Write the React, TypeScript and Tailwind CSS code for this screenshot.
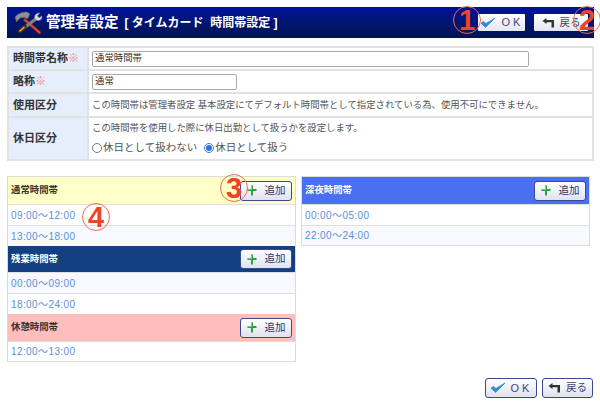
const font = { fontFamily: '"Liberation Sans", "Noto Sans CJK JP", sans-serif' };

function CheckIcon() {
  return (
    <svg width="16" height="12" viewBox="0 0 16 12" className="shrink-0">
      <path d="M1 6 L5.5 10.5 L15 1 L6 6.5 L3.5 4.5 Z" fill="#2f8fd0" stroke="#2f8fd0" strokeWidth="0.8" strokeLinejoin="round" />
    </svg>
  );
}

function BackIcon() {
  return (
    <svg width="13" height="10" viewBox="0 0 13 10" className="shrink-0">
      <path d="M0.5 3 L4.5 0 V2 H12 V9.5 H9.5 V4.2 H4.5 V6 Z" fill="#333" />
    </svg>
  );
}

function PlusIcon() {
  return (
    <svg width="10" height="11" viewBox="0 0 10 11" className="shrink-0">
      <path d="M5 0.5 V10.5" stroke="#2f9f3f" strokeWidth="2" />
      <path d="M0.5 5 H9.5" stroke="#2f9f3f" strokeWidth="2" />
      <path d="M4.6 1 V4.6 H1" fill="none" stroke="#7fe87f" strokeWidth="0.8" />
    </svg>
  );
}

function ToolsIcon() {
  return (
    <svg width="29" height="24" viewBox="0 0 29 24" className="shrink-0">
      {/* hammer handle */}
      <path d="M11 9 L25.5 21.5" stroke="#7a2018" strokeWidth="3.6" strokeLinecap="round" />
      <path d="M11 9 L25.5 21.5" stroke="#d84a35" strokeWidth="1.8" strokeLinecap="round" />
      {/* wrench */}
      <path d="M23 7 L5.5 20.5" stroke="#7d828a" strokeWidth="3.4" />
      <path d="M11 15.5 L5.5 20.5" stroke="#3a2a12" strokeWidth="3.8" strokeLinecap="round" />
      <path d="M10 16.3 L6 20" stroke="#eda52f" strokeWidth="1.6" strokeLinecap="round" />
      <path d="M21 8.5 C19.5 5 22 1.5 26 2 L23.5 4.8 L25 6.8 L28 5 C28.5 9 25 11 21 8.5 Z" fill="#d6d9de" stroke="#6d7178" strokeWidth="0.6" />
      {/* hammer head */}
      <path d="M1 6 C3 3 8 1 13 1 L16 3 L13.5 8 L10.5 6.5 L6 7 L2.5 11 Z" fill="#8f9094" stroke="#55565a" strokeWidth="0.6" />
    </svg>
  );
}

function HeaderButton({ children, width }: { children: React.ReactNode; width: string }) {
  return (
    <div className={`flex h-[17px] items-center justify-center rounded-[1px] bg-gradient-to-b from-white to-[#e4e6f2] text-[#44447a] ${width}`}>
      {children}
    </div>
  );
}

function FootButton({ children, width }: { children: React.ReactNode; width: string }) {
  return (
    <div className={`flex h-[20px] items-center justify-center rounded-[3px] border border-[#3a4a8c] bg-gradient-to-b from-white to-[#dfe2f0] text-[#44447a] ${width}`}>
      {children}
    </div>
  );
}

function AddButton() {
  return (
    <div className="flex h-[20px] w-[52px] items-center justify-center gap-[8px] rounded-[3px] border border-[#3a4a8c] bg-gradient-to-b from-white to-[#dfe2f0] text-[10.5px] text-[#33336b]">
      <PlusIcon />
      <span>追加</span>
    </div>
  );
}

function Row({ label, required, h, last, children }: { label: string; required?: boolean; h: string; last?: boolean; children: React.ReactNode }) {
  return (
    <div className={`flex ${h} ${last ? "" : "border-b-2 border-[#e2e2e2]"}`}>
      <div className="flex w-[80px] shrink-0 items-center border-r-2 border-[#e2e2e2] bg-[#e6edfc] pl-[4px] text-[11px] font-bold text-[#333]">
        {label}
        {required && <span className="font-normal text-[#f08a80]">※</span>}
      </div>
      <div className="flex min-w-0 flex-1 flex-col justify-center pl-[3px] text-[9.4px] text-[#555]">{children}</div>
    </div>
  );
}

function Input({ value, width }: { value: string; width: string }) {
  return (
    <div className={`flex h-[16px] items-center rounded-[2px] border border-[#a8a8a8] bg-white pl-[2px] text-[9.4px] text-[#333] ${width}`}>
      {value}
    </div>
  );
}

function PanelHead({ title, bg, text, h = "h-[27px]" }: { title: string; bg: string; text: string; h?: string }) {
  return (
    <div className={`flex items-center justify-between pl-[3px] pr-[3px] ${h} ${bg}`}>
      <span className={`text-[9.4px] font-bold ${text}`}>{title}</span>
      <AddButton />
    </div>
  );
}

function TimeRow({ time, alt, h = "h-[21px]" }: { time: string; alt?: boolean; h?: string }) {
  return (
    <div className={`flex items-center border-t border-[#e0e0e0] pl-[3px] text-[10px] tracking-[0.4px] text-[#5b8fd8] ${h} ${alt ? "bg-[#f8f9fe]" : "bg-white"}`}>
      {time}
    </div>
  );
}

function Marker({ n, className }: { n: string; className: string }) {
  return (
    <div className={`absolute flex h-[28px] w-[28px] items-center justify-center rounded-full border border-[#f06a50] text-[29px] font-bold leading-none text-[#ee4422] ${className}`}>
      {n}
    </div>
  );
}

export default function App() {
  return (
    <div className="relative h-[402px] w-[600px] overflow-hidden bg-white px-[7px] pt-[7px]" style={font}>
      {/* Title bar */}
      <div className="flex h-[31px] w-[587px] items-center justify-between bg-gradient-to-b from-[#00109a] to-[#02144f] pl-[7px] pr-[6px]">
        <div className="flex items-center gap-[3px]">
          <ToolsIcon />
          <span className="text-[14.5px] font-bold text-white">管理者設定</span>
          <span className="ml-[3px] whitespace-nowrap text-[12px] font-bold text-white">[ タイムカード&nbsp; 時間帯設定 ]</span>
        </div>
        <div className="flex gap-[9px]">
          <HeaderButton width="w-[47px]">
            <CheckIcon />
            <span className="ml-[6px] text-[11px] tracking-[3px]">OK</span>
          </HeaderButton>
          <HeaderButton width="w-[54px]">
            <BackIcon />
            <span className="ml-[5px] text-[10.5px]">戻る</span>
          </HeaderButton>
        </div>
      </div>

      {/* Form table */}
      <div className="mt-[8px] w-[587px] border-2 border-[#e2e2e2]">
        <Row label="時間帯名称" required h="h-[23px]">
          <Input value="通常時間帯" width="w-[437px]" />
        </Row>
        <Row label="略称" required h="h-[23px]">
          <Input value="通常" width="w-[145px]" />
        </Row>
        <Row label="使用区分" h="h-[24px]">
          <span className="whitespace-nowrap">この時間帯は管理者設定 基本設定にてデフォルト時間帯として指定されている為、使用不可にできません。</span>
        </Row>
        <Row label="休日区分" h="h-[41px]" last>
          <span>この時間帯を使用した際に休日出勤として扱うかを設定します。</span>
          <div className="mt-[5px] flex items-center text-[10.5px]">
            <span className="h-[10px] w-[10px] rounded-full border border-[#777] bg-white" />
            <span className="ml-[1px]">休日として扱わない</span>
            <span className="ml-[7px] flex h-[10px] w-[10px] items-center justify-center rounded-full border border-[#3a78d8] bg-white">
              <span className="h-[6px] w-[6px] rounded-full bg-[#2f6fe0]" />
            </span>
            <span className="ml-[1px]">休日として扱う</span>
          </div>
        </Row>
      </div>

      {/* Time band panels */}
      <div className="mt-[15px] flex items-start gap-[5px]">
        <div className="w-[289px] border border-[#dcdcdc]">
          <PanelHead title="通常時間帯" bg="bg-[#ffffc8]" text="text-[#333]" />
          <TimeRow time="09:00～12:00" />
          <TimeRow time="13:00～18:00" alt />
          <PanelHead title="残業時間帯" bg="bg-[#134083]" text="text-white" h="h-[26px]" />
          <TimeRow time="00:00～09:00" alt />
          <TimeRow time="18:00～24:00" />
          <PanelHead title="休憩時間帯" bg="bg-[#ffbebe]" text="text-[#333]" />
          <TimeRow time="12:00～13:00" h="h-[20px]" />
        </div>
        <div className="w-[289px] border border-[#dcdcdc]">
          <PanelHead title="深夜時間帯" bg="bg-[#4a6ff0]" text="text-white" />
          <TimeRow time="00:00～05:00" />
          <TimeRow time="22:00～24:00" alt h="h-[20px]" />
        </div>
      </div>

      {/* Footer buttons */}
      <div className="absolute bottom-[4px] right-[7px] flex gap-[5px]">
        <FootButton width="w-[52px]">
          <CheckIcon />
          <span className="ml-[5px] text-[11px] tracking-[3px]">OK</span>
        </FootButton>
        <FootButton width="w-[51px]">
          <BackIcon />
          <span className="ml-[5px] text-[10.5px]">戻る</span>
        </FootButton>
      </div>

      <Marker n="1" className="left-[453px] top-[6px]" />
      <Marker n="2" className="left-[573px] top-[6px]" />
      <Marker n="3" className="left-[220px] top-[174px]" />
      <Marker n="4" className="left-[82px] top-[203px]" />
    </div>
  );
}
